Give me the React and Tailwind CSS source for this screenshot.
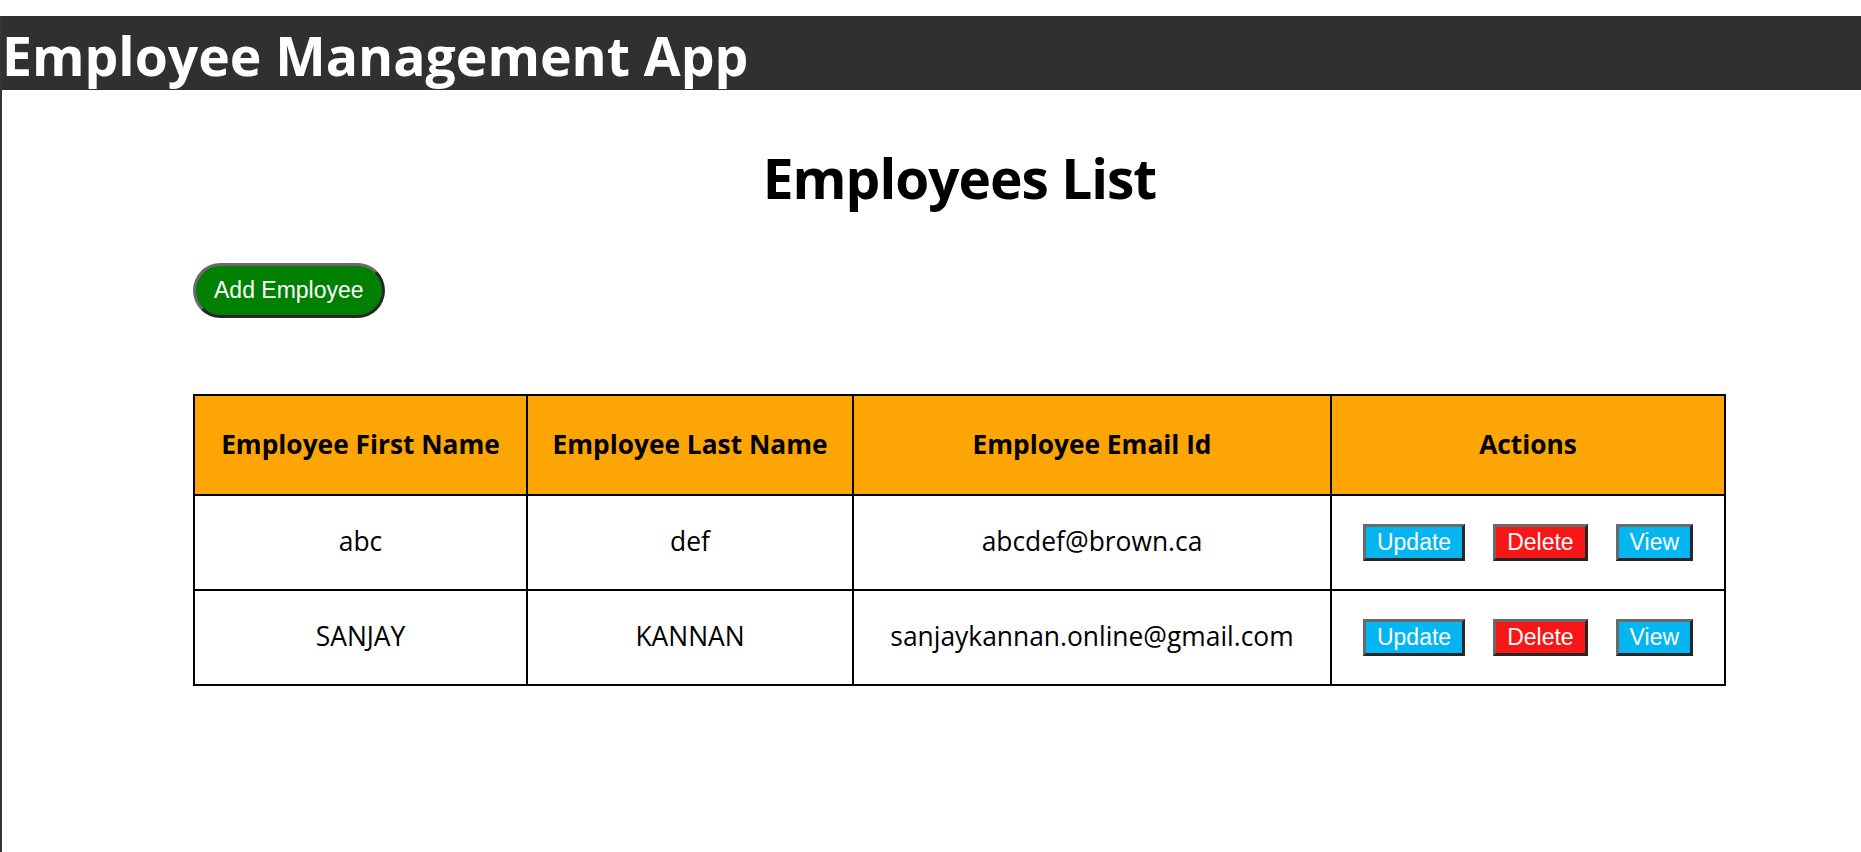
const employees = [
  { id: 1, firstName: 'abc', lastName: 'def', email: 'abcdef@brown.ca' },
  { id: 2, firstName: 'SANJAY', lastName: 'KANNAN', email: 'sanjaykannan.online@gmail.com' },
];

const outset = 'border-[3px] border-t-[#6a6a6a] border-l-[#6a6a6a] border-r-[#262626] border-b-[#262626]';

function ActionButton({ color, children }) {
  return (
    <button className={`h-[37px] px-[11px] ${outset} ${color} text-white text-[23px] leading-none font-['Liberation_Sans',Arial,sans-serif]`}>
      {children}
    </button>
  );
}

export default function App() {
  return (
    <div className="min-h-[852px] bg-white border-l-2 border-[#36362c] font-['Open_Sans',sans-serif] text-black">
      {/* Header */}
      <header className="mt-4 h-[74px] pt-[5px] bg-[#303030] flex items-center">
        <h1 className="text-[53.5px] font-bold text-white leading-none">Employee Management App</h1>
      </header>

      <div className="ml-[191px] w-[1533px]">
        <h2 className="mt-[54px] text-center text-[55px] font-bold leading-[1.25] tracking-[-1px]">Employees List</h2>

        <button className={`mt-[50px] h-[55px] px-[18px] rounded-full ${outset} bg-[#008000] text-white text-[23px] leading-none font-['Liberation_Sans',Arial,sans-serif]`}>
          Add Employee
        </button>

        {/* Employee table */}
        <table className="mt-[76px] w-full border-collapse border-2 border-black table-fixed">
          <thead>
            <tr className="h-[100px] bg-[#fca505]">
              <th className="w-[333px] border-2 border-black text-[26.3px] font-bold">Employee First Name</th>
              <th className="w-[326px] border-2 border-black text-[26.3px] font-bold">Employee Last Name</th>
              <th className="w-[478px] border-2 border-black text-[26.3px] font-bold">Employee Email Id</th>
              <th className="border-2 border-black text-[26.3px] font-bold">Actions</th>
            </tr>
          </thead>
          <tbody>
            {employees.map((e) => (
              <tr key={e.id} className="h-[95px]">
                <td className="border-2 border-black text-center text-[26.4px]">{e.firstName}</td>
                <td className="border-2 border-black text-center text-[26.4px]">{e.lastName}</td>
                <td className="border-2 border-black text-center text-[26.4px]">{e.email}</td>
                <td className="border-2 border-black">
                  <div className="flex justify-center gap-[28px]">
                    <ActionButton color="bg-[#03b5f0]">Update</ActionButton>
                    <ActionButton color="bg-[#f91616]">Delete</ActionButton>
                    <ActionButton color="bg-[#03b5f0]">View</ActionButton>
                  </div>
                </td>
              </tr>
            ))}
          </tbody>
        </table>
      </div>
    </div>
  );
}
